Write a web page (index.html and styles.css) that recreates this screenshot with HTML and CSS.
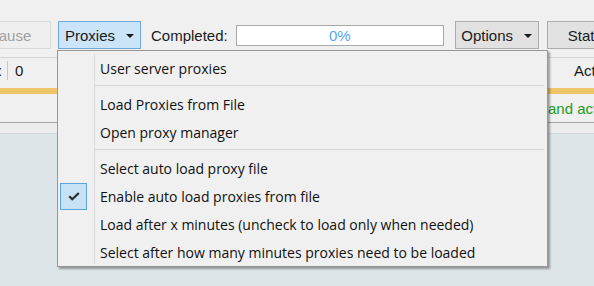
FILE: index.html
```html
<!DOCTYPE html>
<html lang="en">
<head>
  <meta charset="UTF-8" />
  <title>Proxy Checker</title>
  <link rel="stylesheet" href="styles.css">
</head>
<body>
  <div class="window">
    <!-- Top toolbar -->
    <div class="toolbar">
      <button class="btn pause" disabled>Pause</button>
      <button class="btn btn-pressed proxies">Proxies <span class="caret"></span></button>
      <span class="label">Completed:</span>
      <div class="progress"><span>0%</span></div>
      <button class="btn options">Options <span class="caret"></span></button>
      <button class="btn stats">Statistics</button>
    </div>

    <div class="stats-row">
      <div class="cell count"><span class="cut">:</span><span class="val">0</span></div>
      <div class="cell act">Actions</div>
    </div>
    <div class="accent"></div>
    <div class="status-row"><span class="status">and active</span></div>
    <div class="pane-top"></div>
    <div class="pane"></div>

    <!-- Proxies dropdown -->
    <div class="menu">
      <div class="menu-item"><span class="gutter"></span><span class="text">User server proxies</span></div>
      <div class="menu-sep"></div>
      <div class="menu-item"><span class="gutter"></span><span class="text">Load Proxies from File</span></div>
      <div class="menu-item"><span class="gutter"></span><span class="text">Open proxy manager</span></div>
      <div class="menu-sep"></div>
      <div class="menu-item"><span class="gutter"></span><span class="text">Select auto load proxy file</span></div>
      <div class="menu-item">
        <span class="gutter">
          <span class="check">
            <svg width="12" height="9" viewBox="0 0 12 9"><path d="M1.2 4.2 L4.3 7.3 L10.8 1" fill="none" stroke="#2b2b2b" stroke-width="2.2"/></svg>
          </span>
        </span>
        <span class="text">Enable auto load proxies from file</span>
      </div>
      <div class="menu-item"><span class="gutter"></span><span class="text">Load after x minutes (uncheck to load only when needed)</span></div>
      <div class="menu-item"><span class="gutter"></span><span class="text">Select after how many minutes proxies need to be loaded</span></div>
    </div>
  </div>
</body>
</html>
```

FILE: styles.css
```css
:root {
  --face: #f0f0f0;
  --pane: #dde5e9;
  --accent: #efc56a;
  --menu-border: #979797;
}

body {
  margin: 0;
  background-color: var(--face);
  font-family: 'Liberation Sans', Arial, sans-serif;
  font-size: 15px;
  color: #1a1a1a;
}

.window {
  position: relative;
  width: 594px;
  height: 286px;
  overflow: hidden;
  display: flex;
  flex-direction: column;
}

.toolbar {
  display: flex;
  align-items: center;
  height: 28px;
  margin-top: 21px;
  white-space: nowrap;
}

.toolbar > * {
  flex-shrink: 0;
}

.btn {
  height: 28px;
  padding: 0;
  font-family: inherit;
  font-size: 15px;
  color: #1a1a1a;
  background-color: #e1e1e1;
  border: 1px solid #adadad;
  display: flex;
  align-items: center;
  justify-content: center;
  gap: 11px;
}

.btn:disabled {
  color: #a0a0a0;
  background-color: #efefef;
  border-color: #d9d9d9;
}

.btn-pressed {
  background-color: #cce4f7;
  border-color: #6ea9de;
}

.caret {
  width: 0;
  height: 0;
  border-left: 4px solid transparent;
  border-right: 4px solid transparent;
  border-top: 4px solid #1a1a1a;
  margin-top: 2px;
}

.pause {
  width: 82px;
  margin-left: -31px;
}

.proxies {
  width: 83px;
  margin-left: 7px;
}

.label {
  margin-left: 10px;
}

.progress {
  width: 206px;
  height: 19px;
  margin-left: 8px;
  background: white;
  border: 1px solid #a9a9a9;
  display: flex;
  align-items: center;
  justify-content: center;
  color: #5aa6ee;
}

.options {
  width: 84px;
  margin-left: 11px;
}

.stats {
  width: 90px;
  margin-left: 8px;
  justify-content: flex-start;
  padding-left: 20px;
}

.stats-row {
  display: flex;
  justify-content: space-between;
  margin-top: 8px;
  height: 25px;
}

.cell {
  border-top: 1px solid #d6d6d6;
  display: flex;
  align-items: center;
  white-space: nowrap;
}

.count {
  width: 57px;
}

.cut {
  width: 9px;
  margin-left: -2px;
}

.val {
  border-left: 1px solid #c8c8c8;
  padding-left: 7px;
  height: 19px;
  line-height: 19px;
}

.act {
  width: 46px;
  box-sizing: border-box;
  padding-left: 25px;
  border-left: 1px solid #fafafa;
  overflow: hidden;
}

.accent {
  margin-top: 6px;
  height: 6px;
  background-color: var(--accent);
}

.status-row {
  height: 28px;
  display: flex;
  align-items: center;
  padding-left: 548px;
  white-space: nowrap;
  border-bottom: 1px solid #a3a3a3;
}

.status {
  color: #1f9a1f;
}

.pane-top {
  height: 10px;
  border-bottom: 1px solid #d2d9dc;
  background-color: #ececec;
}

.pane {
  flex: 1;
  background-color: var(--pane);
}

/* Dropdown */
.menu {
  position: absolute;
  left: 57px;
  top: 50px;
  width: 489px;
  padding: 3px 0 0;
  background-color: #f0f0f0;
  border: 1px solid var(--menu-border);
  box-shadow: 2px 2px 2px rgba(0, 0, 0, 0.35);
  font-family: 'Open Sans', sans-serif;
  font-size: 14px;
  color: #111;
}

.menu::before {
  content: "";
  position: absolute;
  left: 36px;
  top: 3px;
  bottom: 2px;
  width: 1px;
  background-color: #dadada;
}

.menu-item {
  display: flex;
  align-items: center;
  height: 28px;
  white-space: nowrap;
}

.gutter {
  width: 36px;
  height: 28px;
  display: flex;
  align-items: center;
  padding-left: 2px;
  box-sizing: border-box;
  flex-shrink: 0;
}

.check {
  width: 25px;
  height: 25px;
  background-color: #c6e2f4;
  border: 1px solid #5aa5dc;
  display: flex;
  align-items: center;
  justify-content: center;
}

.text {
  padding-left: 6px;
}

.menu-sep {
  height: 1px;
  margin: 3px 3px 4px 37px;
  background-color: #d7d7d7;
}
```
